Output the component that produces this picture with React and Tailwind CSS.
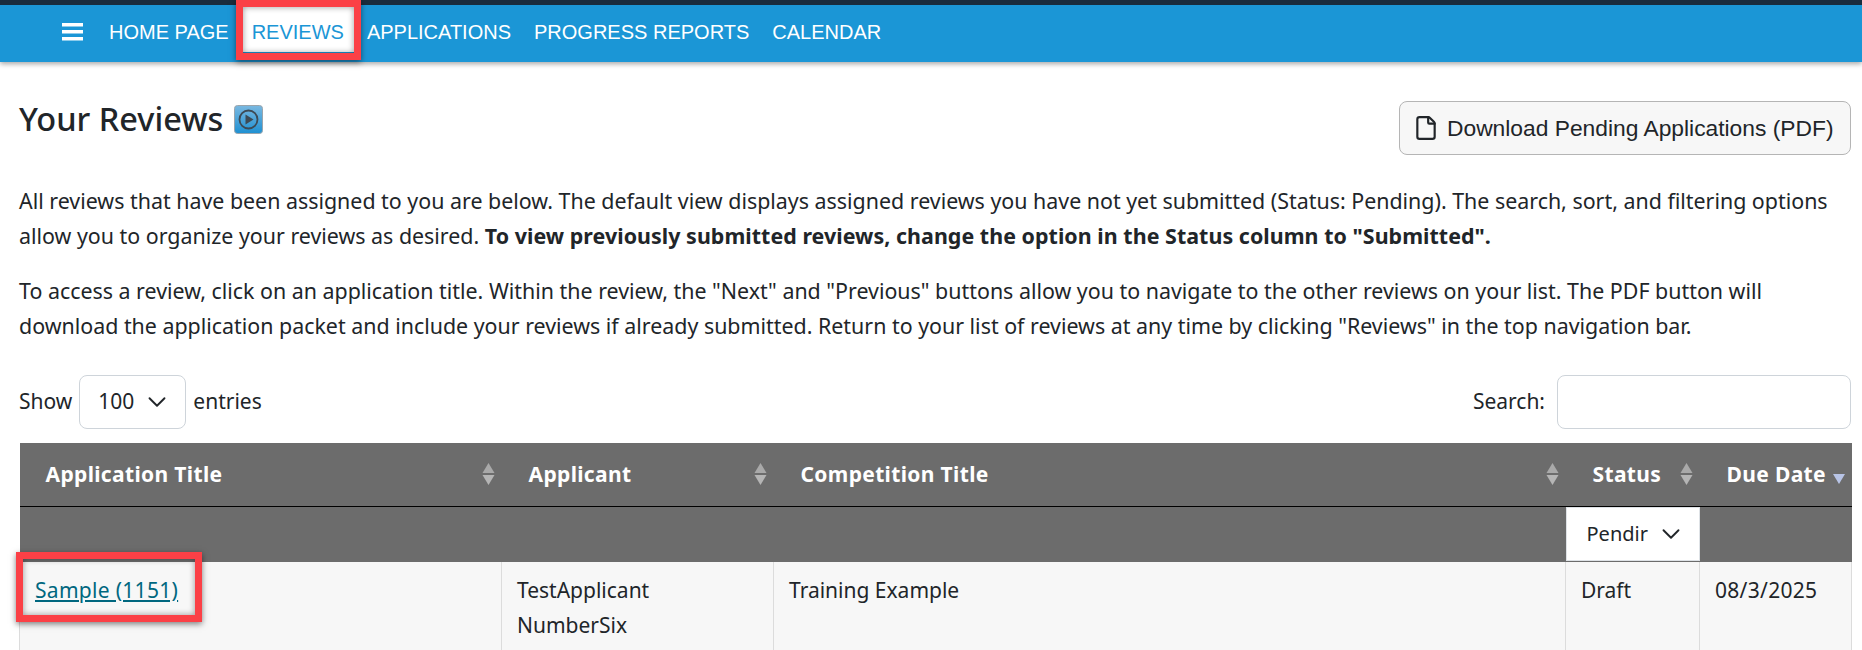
import React from "react";
import { ChevronDown, File } from "lucide-react";

const navItems = ["HOME PAGE", "REVIEWS", "APPLICATIONS", "PROGRESS REPORTS", "CALENDAR"];

function SortIcon() {
  return (
    <svg width="13" height="22" viewBox="0 0 13 22" className="shrink-0">
      <path d="M6.5 0 L12.5 10 H0.5 Z" fill="#a9a9a9" />
      <path d="M6.5 22 L12.5 12 H0.5 Z" fill="#b5b5b5" />
    </svg>
  );
}

function VideoIcon() {
  return (
    <svg width="29" height="29" viewBox="0 0 29 29" className="shrink-0">
      <defs>
        <linearGradient id="vid" x1="0" y1="0" x2="0" y2="1">
          <stop offset="0" stopColor="#7ab8e0" />
          <stop offset="1" stopColor="#1e90d2" />
        </linearGradient>
      </defs>
      <rect x="0.5" y="0.5" width="28" height="28" rx="3" fill="url(#vid)" stroke="#9aa5ad" />
      <circle cx="14.5" cy="14.5" r="9" fill="none" stroke="#3d4a55" strokeWidth="1.8" />
      <path d="M11.5 9.5 L19.5 14.5 L11.5 19.5 Z" fill="#3d4a55" />
    </svg>
  );
}

export default function App() {
  return (
    <div className="relative h-[650px] overflow-hidden bg-white font-['Noto_Sans',sans-serif] text-[21.4px] text-[#212529]">
      <nav className="flex h-[62px] items-start border-t-[5px] border-[#1a2c3d] bg-[#1b96d6] pl-[62px] shadow-[0_2px_5px_rgba(0,0,0,0.35)] font-['Liberation_Sans',sans-serif] text-[20px] text-white">
        <svg width="21" height="18" viewBox="0 0 21 18" className="mr-[14.5px] mt-[18px]">
          <rect width="21" height="3.5" fill="#fff" />
          <rect y="7" width="21" height="3.5" fill="#fff" />
          <rect y="14" width="21" height="3.5" fill="#fff" />
        </svg>
        <div className="flex">
          {navItems.map((item) =>
            item === "REVIEWS" ? (
              <span key={item} className="flex h-[47px] items-center bg-white px-[11.5px] pt-[7px] text-[#1b96d6]">{item}</span>
            ) : (
              <span key={item} className="flex h-[47px] items-center px-[11.5px] pt-[7px]">{item}</span>
            )
          )}
        </div>
      </nav>

      <main className="px-[19px] pr-[11px]">
        <div className="flex items-start justify-between pt-[39px]">
          <h1 className="flex items-center gap-[11px] text-[32.5px] font-medium leading-[36px]">
            Your Reviews <VideoIcon />
          </h1>
          <button className="flex h-[54px] w-[452px] items-center gap-[8px] rounded-[8px] border border-[#b5b5b5] bg-[#f7f7f7] pl-[13px] font-['Liberation_Sans',sans-serif] text-[22.8px]">
            <File size={26} strokeWidth={2} />
            Download Pending Applications (PDF)
          </button>
        </div>

        <p className="mt-[28px] leading-[35px]">
          All reviews that have been assigned to you are below. The default view displays assigned reviews you have not yet submitted (Status: Pending). The search, sort, and filtering options<br />allow you to organize your reviews as desired. <b className="tracking-[0.05px]">To view previously submitted reviews, change the option in the Status column to "Submitted".</b>
        </p>
        <p className="mt-[20px] leading-[35px]">
          To access a review, click on an application title. Within the review, the "Next" and "Previous" buttons allow you to navigate to the other reviews on your list. The PDF button will<br />download the application packet and include your reviews if already submitted. Return to your list of reviews at any time by clicking "Reviews" in the top navigation bar.
        </p>

        <div className="mt-[32px] flex h-[54px] items-center justify-between text-[21px]">
          <div className="flex items-center gap-[7px]">
            Show
            <div className="flex h-[54px] w-[107px] items-center justify-between rounded-[8px] border border-[#ced4da] pl-[18px] pr-[13px]">
              100 <ChevronDown size={30} strokeWidth={1.5} />
            </div>
            entries
          </div>
          <div className="flex items-center gap-[12px]">
            Search:
            <div className="h-[54px] w-[294px] rounded-[8px] border border-[#ced4da]"></div>
          </div>
        </div>

        <table className="mt-[14px] w-[1832px] table-fixed border-collapse text-[21px] leading-[35px]">
          <colgroup>
            <col className="w-[482px]" />
            <col className="w-[272px]" />
            <col className="w-[792px]" />
            <col className="w-[134px]" />
            <col className="w-[152px]" />
          </colgroup>
          <thead className="bg-[#6c6c6c] text-white">
            <tr className="h-[63px] border-b border-black font-bold tracking-[0.35px]">
              <th className="pl-[26px] pr-[7px] text-left">
                <div className="flex items-center justify-between">Application Title <SortIcon /></div>
              </th>
              <th className="pl-[27px] pr-[7px] text-left">
                <div className="flex items-center justify-between">Applicant <SortIcon /></div>
              </th>
              <th className="pl-[27px] pr-[7px] text-left">
                <div className="flex items-center justify-between">Competition Title <SortIcon /></div>
              </th>
              <th className="pl-[27px] pr-[7px] text-left">
                <div className="flex items-center justify-between">Status <SortIcon /></div>
              </th>
              <th className="pl-[27px] pr-[7px] text-left">
                <div className="flex items-center justify-between whitespace-nowrap">
                  Due Date
                  <svg width="12" height="10" viewBox="0 0 12 10" className="mt-[10px]">
                    <path d="M0 0 H12 L6 10 Z" fill="#b8c4e6" />
                  </svg>
                </div>
              </th>
            </tr>
            <tr className="h-[55px]">
              <td></td>
              <td></td>
              <td></td>
              <td className="p-0 pb-[1px]">
                <div className="flex h-[54px] items-center justify-between border border-[#dee2e6] bg-white pl-[20px] pr-[13px] text-[20px] text-[#212529]">
                  Pendir <ChevronDown size={30} strokeWidth={1.5} />
                </div>
              </td>
              <td></td>
            </tr>
          </thead>
          <tbody className="bg-[#f7f7f7]">
            <tr className="h-[120px] align-top">
              <td className="border-x border-[#dcdcdc] px-[15px] pt-[11px]">
                <a href="#" className="text-[#00677f] underline tracking-[0.3px]">Sample (1151)</a>
              </td>
              <td className="border-x border-[#dcdcdc] px-[15px] pt-[11px]">
                TestApplicant<br />NumberSix
              </td>
              <td className="border-x border-[#dcdcdc] px-[15px] pt-[11px]">Training Example</td>
              <td className="border-x border-[#dcdcdc] px-[15px] pt-[11px]">Draft</td>
              <td className="border-x border-[#dcdcdc] px-[15px] pt-[11px] tracking-[0.3px]">08/3/2025</td>
            </tr>
          </tbody>
        </table>
      </main>

      {/* red callouts drawn over the screenshot */}
      <div className="absolute left-[236px] top-0 h-[60px] w-[125px] border-[7px] border-[#fb4046] shadow-[0_2px_6px_rgba(0,0,0,0.5),inset_0_0_6px_rgba(0,0,0,0.4)]"></div>
      <div className="absolute left-[16px] top-[552px] h-[70px] w-[186px] border-[7px] border-[#fb4046] shadow-[0_2px_6px_rgba(0,0,0,0.5),inset_0_0_6px_rgba(0,0,0,0.4)]"></div>
    </div>
  );
}
